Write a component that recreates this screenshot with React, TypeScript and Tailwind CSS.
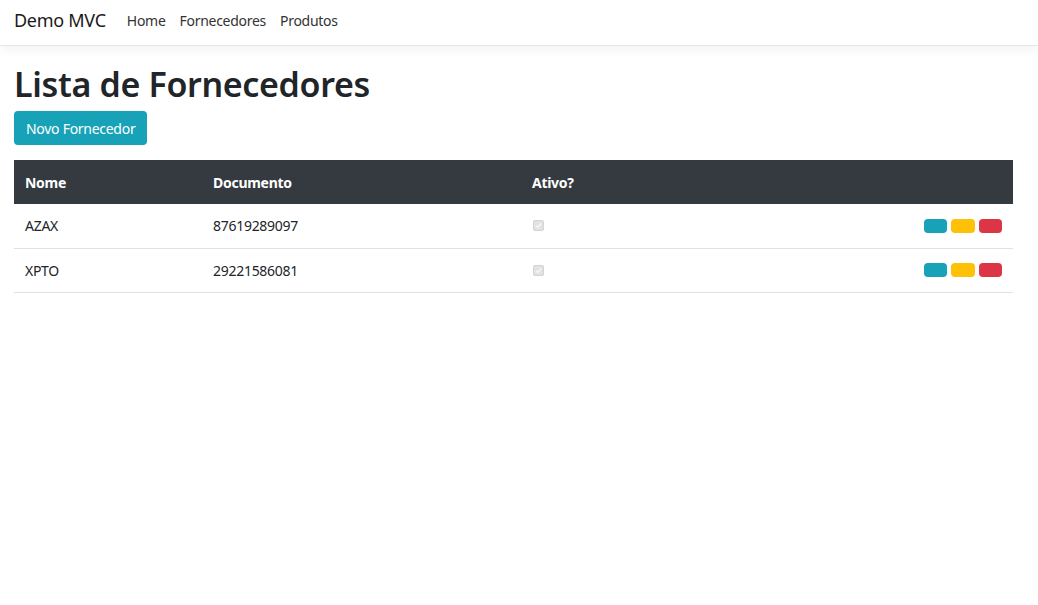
import React from "react";

const rows = [
  { nome: "AZAX", doc: "87619289097" },
  { nome: "XPTO", doc: "29221586081" },
];

function Check() {
  return (
    <span className="inline-flex h-[11px] w-[11px] items-center justify-center rounded-[2px] border border-[#d3d3d3] bg-[#e2e2e2]">
      <svg width="9" height="9" viewBox="0 0 10 10">
        <path d="M2 5.2 L4.2 7.3 L8 2.8" fill="none" stroke="#f6f6f6" strokeWidth="1.6" />
      </svg>
    </span>
  );
}

export default function App() {
  return (
    <div className="min-h-[605px] bg-white text-[14px] tracking-[-0.02em] text-[#212529]" style={{ fontFamily: '"Segoe UI", "Noto Sans", sans-serif' }}>
      <nav className="flex h-[46px] items-center border-b border-[#e5e5e5] bg-white px-[14px] pb-[5px] shadow-[0_4px_10px_rgba(0,0,0,0.05)]">
        <span className="mr-[14px] text-[18px] text-[#1a1a1a]">Demo MVC</span>
        <a className="px-[7px] text-[#333]">Home</a>
        <a className="px-[7px] text-[#333]">Fornecedores</a>
        <a className="px-[7px] text-[#333]">Produtos</a>
      </nav>
      <main className="pl-[14px] pr-[25px] pt-[16px]">
        <h1 className="mb-[5px] text-[34px] font-semibold leading-[44px] tracking-[-0.01em] text-[#212529]">Lista de Fornecedores</h1>
        <div className="mb-[15px]">
          <a className="inline-flex h-[34px] items-center rounded-[4px] bg-[#17a2b8] px-[12px] text-white">Novo Fornecedor</a>
        </div>
        <table className="w-full border-collapse">
          <thead>
            <tr className="h-[44px] bg-[#343a40] text-left font-bold text-white">
              <th className="w-[188px] px-[11px]">Nome</th>
              <th className="w-[319px] px-[11px]">Documento</th>
              <th className="px-[11px]">Ativo?</th>
              <th className="px-[11px]"></th>
            </tr>
          </thead>
          <tbody>
            {rows.map((r) => (
              <tr key={r.nome} className="h-[44px] border-b border-[#dee2e6]">
                <td className="px-[11px]">{r.nome}</td>
                <td className="px-[11px]">{r.doc}</td>
                <td className="px-[11px] align-middle">
                  <div className="ml-[1px] flex"><Check /></div>
                </td>
                <td className="px-[11px]">
                  <div className="flex justify-end gap-[4px]">
                    <span className="h-[14px] w-[23px] rounded-[4px] bg-[#17a2b8]" />
                    <span className="h-[14px] w-[24px] rounded-[4px] bg-[#ffc107]" />
                    <span className="h-[14px] w-[23px] rounded-[4px] bg-[#dc3545]" />
                  </div>
                </td>
              </tr>
            ))}
          </tbody>
        </table>
      </main>
    </div>
  );
}
